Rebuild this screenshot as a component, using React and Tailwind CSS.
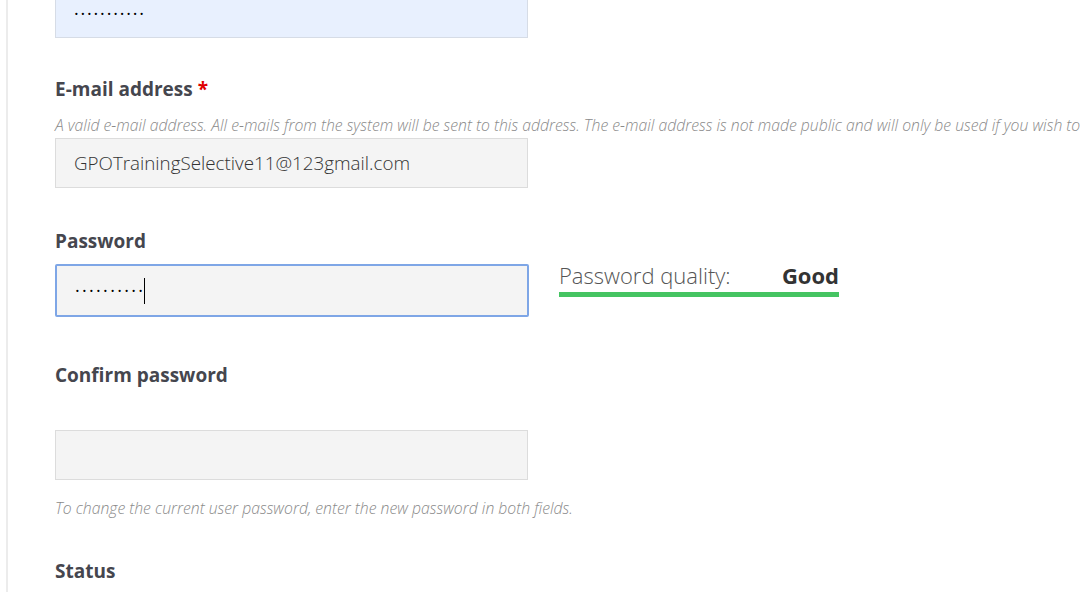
import React from 'react';

const font = { fontFamily: '"Open Sans", "Liberation Sans", sans-serif' };

const Label = ({ children, className = '' }) => (
  <div className={`text-[19px] leading-[24px] font-bold text-[#45464e] ${className}`}>{children}</div>
);

const Help = ({ children, className = '' }) => (
  <div className={`text-[15.75px] leading-[20px] font-light italic text-[#8a8a8a] whitespace-nowrap ${className}`}>{children}</div>
);

const App = () => {
  return (
    <div className="h-[592px] w-[1081px] overflow-hidden bg-white pl-[6px]" style={font}>
      <div className="h-full flex flex-col border-l-2 border-[#ececec] pl-[47px]">
        {/* autofilled field from above */}
        <div className="-mt-[12px] h-[50px] w-[473px] shrink-0 border border-[#d6dce6] bg-[#e8f0fe] pl-[18px] flex items-center">
          <span className="text-[18px] tracking-[1.8px] text-black">{'·'.repeat(11)}</span>
        </div>

        {/* email */}
        <Label className="mt-[39px]">
          E-mail address <span className="text-[#e00000]">*</span>
        </Label>
        <Help className="mt-[14px]">
          A valid e-mail address. All e-mails from the system will be sent to this address. The e-mail address is not made public and will only be used if you wish to
        </Help>
        <div className="mt-[3px] h-[50px] w-[473px] shrink-0 border border-[#dcdcdc] bg-[#f4f4f4] pl-[18px] flex items-center text-[18.8px] font-light text-[#333]">
          GPOTrainingSelective11@123gmail.com
        </div>

        {/* password */}
        <Label className="mt-[41px]">Password</Label>
        <div className="mt-[7px] flex items-start">
          <div className="mt-[4px] h-[53px] w-[474px] rounded-[2px] border-2 border-[#7ea6e6] bg-[#f4f4f4] pl-[18px] flex items-center">
            <span className="text-[18px] tracking-[2.3px] text-black">{'·'.repeat(10)}</span>
            <span className="ml-[-1px] h-[26px] w-px bg-black"></span>
          </div>
          <div className="ml-[30px] w-[280px]">
            <div className="flex justify-between text-[22px] leading-[30px]">
              <span className="font-light text-[#555]">Password quality:</span>
              <span className="font-bold text-[#333]">Good</span>
            </div>
            <div className="mt-[2px] h-[5px] w-full bg-[#45c462]"></div>
          </div>
        </div>

        {/* confirm */}
        <Label className="mt-[46px]">Confirm password</Label>
        <div className="mt-[43px] h-[50px] w-[473px] shrink-0 border border-[#dcdcdc] bg-[#f4f4f4]"></div>
        <Help className="mt-[18px]">To change the current user password, enter the new password in both fields.</Help>

        {/* status */}
        <Label className="mt-[41px]">Status</Label>
      </div>
    </div>
  );
};

export default App;
